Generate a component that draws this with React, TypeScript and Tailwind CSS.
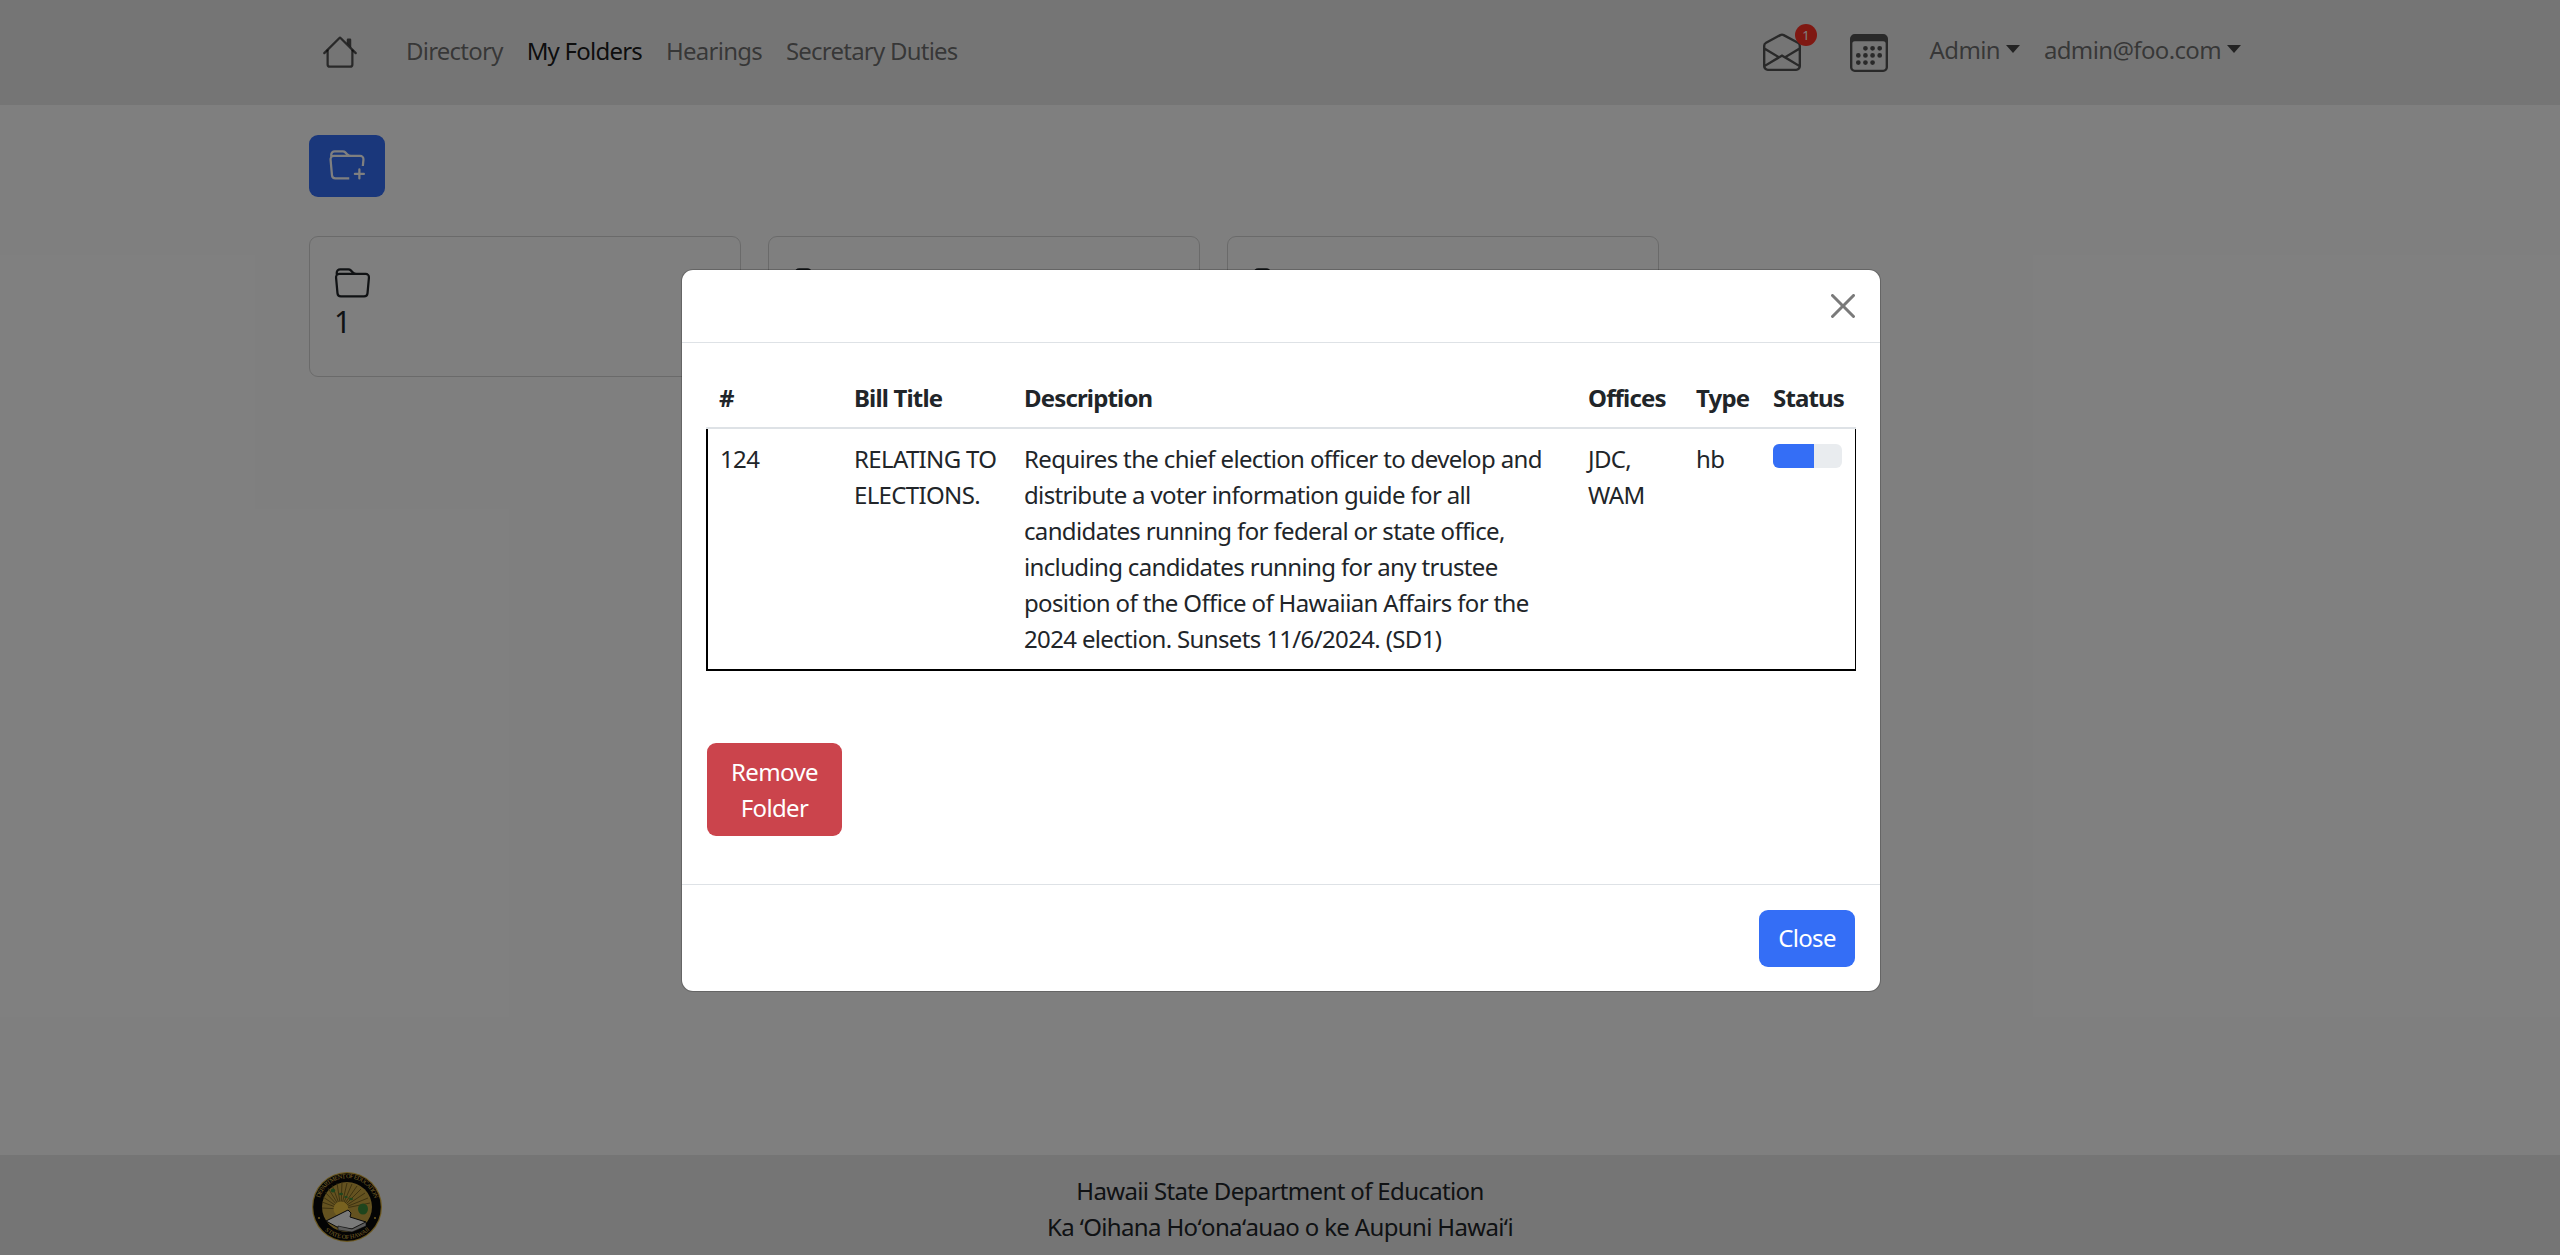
import React from "react";
import { BsCalendar3, BsEnvelopeOpen, BsFolder, BsFolderPlus } from "react-icons/bs";

const font = { fontFamily: '"Noto Sans", "Open Sans", sans-serif' };

function HouseIcon() {
  return (
    <svg viewBox="0 0 16 16" fill="currentColor" className="w-[36px] h-[36px]">
      <path d="M2 13.5V7h1v6.5a.5.5 0 0 0 .5.5h9a.5.5 0 0 0 .5-.5V7h1v6.5a1.5 1.5 0 0 1-1.5 1.5h-9A1.5 1.5 0 0 1 2 13.5zm11-11V6l-2-2V2.5a.5.5 0 0 1 .5-.5h1a.5.5 0 0 1 .5.5z" />
      <path d="M7.293 1.5a1 1 0 0 1 1.414 0l6.647 6.646a.5.5 0 0 1-.708.708L8 2.207 1.354 8.854a.5.5 0 1 1-.708-.708L7.293 1.5z" />
    </svg>
  );
}

function Seal() {
  return (
    <svg viewBox="0 0 70 70" className="w-[70px] h-[70px]">
      <defs>
        <path id="sealTop" d="M7.5 42 A28.5 28.5 0 1 1 62.5 42" fill="none" />
        <path id="sealBottom" d="M11 49 A28.5 28.5 0 0 0 59 49" fill="none" />
      </defs>
      <circle cx="35" cy="35" r="35" fill="#d8b040" />
      <circle cx="35" cy="35" r="33.8" fill="#080808" />
      <circle cx="35" cy="35" r="25" fill="#c8a440" />
      <g stroke="#5c4a14" strokeWidth="0.7">
        <path d="M29 37 L10 30 M29 37 L11 25 M29 37 L13 20 M29 37 L16 16 M29 37 L20 13 M29 37 L25 11 M29 37 L30 10 M29 37 L35 11 M29 37 L40 12 M29 37 L45 14 M29 37 L49 17 M29 37 L53 21 M29 37 L56 26 M29 37 L58 31 M29 37 L10 36" />
      </g>
      <circle cx="29" cy="37" r="7.5" fill="#f0c440" />
      <g fill="#3c8a3a">
        <ellipse cx="21" cy="18.5" rx="2.2" ry="2" />
        <ellipse cx="29" cy="22" rx="2" ry="1.2" />
        <ellipse cx="34" cy="25" rx="1.8" ry="1" />
        <ellipse cx="39" cy="27" rx="2" ry="1.2" />
        <ellipse cx="51" cy="37" rx="5" ry="5.5" />
      </g>
      <path d="M14 49 L28 42 L36 38 L39 41 L38 45 L54 50 L40 57 L25 55 Z" fill="#f4f4f4" stroke="#111" strokeWidth="1" />
      <path d="M26 54 L40 57 L54 50 L54 54 L40 60 L26 58 Z" fill="#b9b9b9" stroke="#111" strokeWidth="0.6" />
      <circle cx="7" cy="46" r="1.1" fill="#d8b040" />
      <circle cx="63" cy="46" r="1.1" fill="#d8b040" />
      <text fontSize="6.2" fill="#e8c450" fontFamily="Liberation Serif, serif">
        <textPath href="#sealTop" startOffset="50%" textAnchor="middle">DEPARTMENT OF EDUCATION</textPath>
      </text>
      <text fontSize="6.2" fill="#e8c450" fontFamily="Liberation Serif, serif">
        <textPath href="#sealBottom" startOffset="50%" textAnchor="middle" dominantBaseline="hanging">STATE OF HAWAII</textPath>
      </text>
    </svg>
  );
}

function FolderCard({ name }: { name: string }) {
  return (
    <div className="w-[432px] h-[141px] rounded-[9px] border border-[#d5d5d5] bg-white px-[24px] pt-[29px] text-[#212529]">
      <BsFolder className="block w-[37px] h-[36px]" />
      <div className="text-[30px] leading-[36px] mt-[2px]">{name}</div>
    </div>
  );
}

const thClass = "px-[12px] pt-[12px] pb-[11px] text-left align-bottom font-bold tracking-[-0.035em] border-b-2 border-[#dee2e6]";
const tdClass = "px-[12px] py-[12px] align-top border-b-2 border-black";

export default function App() {
  return (
    <div style={font} className="relative h-screen flex flex-col overflow-hidden bg-white text-[24px] leading-[36px] tracking-[-0.027em] text-[#212529]">
      <nav className="h-[105px] bg-[#ebebeb] shrink-0">
        <div className="w-[1942px] mx-auto h-full flex items-center pl-[13px] pr-[10px]">
          <span className="text-black/65 -mt-[2px]"><HouseIcon /></span>
          <div className="flex ml-[48px] gap-[24px] -mt-[4px] text-black/55 tracking-[-0.032em]">
            <a>Directory</a>
            <a className="text-black/90">My Folders</a>
            <a>Hearings</a>
            <a>Secretary Duties</a>
          </div>
          <div className="ml-auto flex items-center text-black/55">
            <span className="relative text-black/65 -mt-[1px]">
              <BsEnvelopeOpen className="block w-[38px] h-[38px]" />
              <span className="absolute -top-[9px] -right-[16px] w-[22px] h-[22px] rounded-full bg-[#ff3024] text-white text-[13px] leading-[22px] text-center">1</span>
            </span>
            <span className="ml-[49px] text-black/65"><BsCalendar3 className="block w-[38px] h-[38px]" /></span>
            <a className="ml-[42px] flex items-center -mt-[5px]">
              Admin
              <span className="ml-[6px] mb-[2px] w-0 h-0 border-x-[7px] border-x-transparent border-t-[8px] border-t-black/70" />
            </a>
            <a className="ml-[24px] flex items-center -mt-[5px]">
              admin@foo.com
              <span className="ml-[6px] mb-[2px] w-0 h-0 border-x-[7px] border-x-transparent border-t-[8px] border-t-black/70" />
            </a>
          </div>
        </div>
      </nav>

      <main className="flex-1">
        <div className="w-[1942px] mx-auto pt-[30px]">
          <button className="w-[76px] h-[62px] rounded-[9px] bg-[#346ef6] text-white flex items-center justify-center">
            <BsFolderPlus className="w-[36px] h-[36px]" />
          </button>
          <div className="flex gap-[27px] mt-[39px]">
            <FolderCard name="1" />
            <FolderCard name="2" />
            <FolderCard name="3" />
          </div>
        </div>
      </main>

      <footer className="h-[100px] bg-[#ebebeb] shrink-0">
        <div className="relative w-[1942px] mx-auto h-full pt-[18px] text-center">
          <div className="absolute left-[3px] top-[17px]"><Seal /></div>
          <div>Hawaii State Department of Education</div>
          <div>Ka ʻOihana Hoʻonaʻauao o ke Aupuni Hawaiʻi</div>
        </div>
      </footer>

      <div className="absolute inset-0 bg-black/50 flex justify-center pt-[269px] pl-[2px]">
        <div className="w-[1200px] h-[723px] bg-white rounded-[12px] border border-black/20 flex flex-col bg-clip-padding">
          <div className="h-[73px] shrink-0 flex items-center justify-end pr-[25px] border-b-[1.5px] border-[#dee2e6]">
            <svg viewBox="0 0 16 16" className="w-[24px] h-[24px] text-[#7a7a7a]" fill="currentColor">
              <path d="M.293.293a1 1 0 0 1 1.414 0L8 6.586 14.293.293a1 1 0 1 1 1.414 1.414L9.414 8l6.293 6.293a1 1 0 0 1-1.414 1.414L8 9.414l-6.293 6.293a1 1 0 0 1-1.414-1.414L6.586 8 .293 1.707a1 1 0 0 1 0-1.414z" />
            </svg>
          </div>
          <div className="flex-1 px-[24px] pt-[25px] pb-[48px]">
            <table className="w-[1148px] table-fixed border-collapse">
              <colgroup>
                <col className="w-[135px]" />
                <col className="w-[170px]" />
                <col className="w-[564px]" />
                <col className="w-[108px]" />
                <col className="w-[77px]" />
                <col className="w-[94px]" />
              </colgroup>
              <thead>
                <tr>
                  <th className={thClass}>#</th>
                  <th className={thClass}>Bill Title</th>
                  <th className={thClass}>Description</th>
                  <th className={thClass}>Offices</th>
                  <th className={thClass}>Type</th>
                  <th className={thClass}>Status</th>
                </tr>
              </thead>
              <tbody>
                <tr>
                  <td className={tdClass + " border-l-2 border-l-black"}>124</td>
                  <td className={tdClass}>RELATING TO ELECTIONS.</td>
                  <td className={tdClass}>
                    Requires the chief election officer to develop and distribute a voter information guide for all candidates running for federal or state office, including candidates running for any trustee position of the Office of Hawaiian Affairs for the 2024 election. Sunsets 11/6/2024. (SD1)
                  </td>
                  <td className={tdClass}>JDC, WAM</td>
                  <td className={tdClass}>hb</td>
                  <td className={tdClass + " border-r border-r-black"}>
                    <div className="w-[69px] h-[24px] mt-[3px] rounded-[6px] bg-[#e9ecef] overflow-hidden">
                      <div className="w-[60%] h-full bg-[#346ef6]" />
                    </div>
                  </td>
                </tr>
              </tbody>
            </table>
            <button className="block mt-[72px] ml-[1px] w-[135px] h-[93px] rounded-[9px] bg-[#cb444c] text-white text-center px-[18px]">Remove Folder</button>
          </div>
          <div className="h-[107px] shrink-0 flex items-center justify-end pr-[25px] border-t-[1.5px] border-[#dee2e6]">
            <button className="w-[96px] h-[57px] rounded-[9px] bg-[#346ef6] text-white">Close</button>
          </div>
        </div>
      </div>
    </div>
  );
}
